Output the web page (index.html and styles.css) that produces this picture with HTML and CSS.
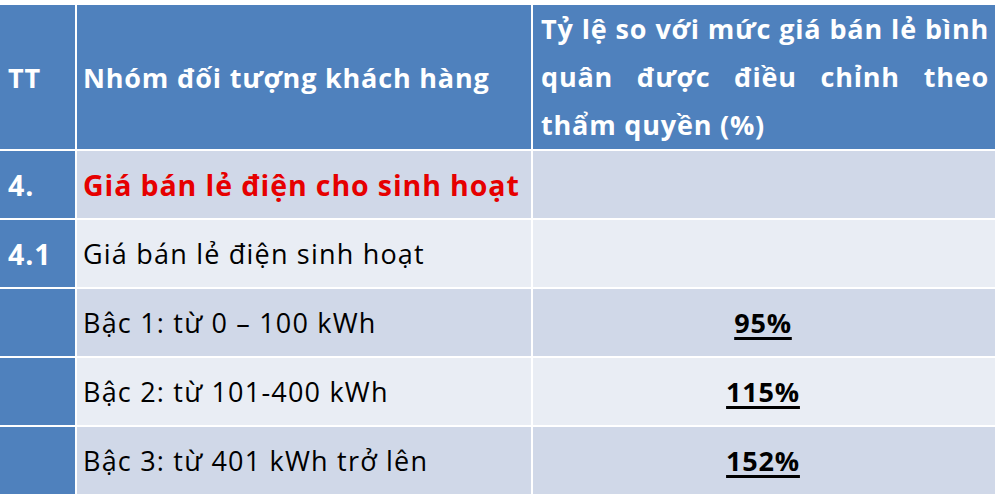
FILE: index.html
```html
<!DOCTYPE html>
<html lang="vi">
<head>
<meta charset="utf-8">
<link rel="stylesheet" href="styles.css">
</head>
<body>
<table class="tariff">
  <colgroup>
    <col class="c-no">
    <col class="c-group">
    <col class="c-ratio">
  </colgroup>
  <thead>
    <tr class="head">
      <th class="no">TT</th>
      <th class="group">Nhóm đối tượng khách hàng</th>
      <th class="ratio">Tỷ lệ so với mức giá bán lẻ bình quân được điều chỉnh theo thẩm quyền (%)</th>
    </tr>
  </thead>
  <tbody>
    <tr class="odd">
      <td class="no">4.</td>
      <td class="title">Giá bán lẻ điện cho sinh hoạt</td>
      <td></td>
    </tr>
    <tr class="even">
      <td class="no">4.1</td>
      <td>Giá bán lẻ điện sinh hoạt</td>
      <td></td>
    </tr>
    <tr class="odd">
      <td class="no"></td>
      <td>Bậc 1: từ 0 – 100 kWh</td>
      <td class="pct"><span>95%</span></td>
    </tr>
    <tr class="even">
      <td class="no"></td>
      <td>Bậc 2: từ 101-400 kWh</td>
      <td class="pct"><span>115%</span></td>
    </tr>
    <tr class="odd">
      <td class="no"></td>
      <td>Bậc 3: từ 401 kWh trở lên</td>
      <td class="pct"><span>152%</span></td>
    </tr>
  </tbody>
</table>
</body>
</html>
```
FILE: styles.css
```css
html, body {
  margin: 0;
  padding: 0;
  background: #ffffff;
}
body {
  padding-top: 5px;
  font-family: "Open Sans", Lato, sans-serif;
}
.tariff {
  border-collapse: collapse;
  width: 996px;
  table-layout: fixed;
  font-size: 27px;
  letter-spacing: 1.2px;
  color: #000;
}
.c-no { width: 76px; }
.c-group { width: 456px; }
.c-ratio { width: 464px; }
.tariff th, .tariff td {
  border: 2px solid #ffffff;
  padding: 0 8px 0 6px;
  vertical-align: middle;
  text-align: left;
}
.tariff tr > :first-child { border-left: none; }
.tariff thead tr > * { border-top: none; }
.head th {
  background: #4f81bd;
  color: #ffffff;
  font-weight: bold;
  letter-spacing: 0.8px;
  height: 141px;
}
.head th.ratio {
  text-align: justify;
  line-height: 48px;
  padding: 0 6px 0 8px;
}
.tariff td { height: 67px; }
.odd td { background: #d0d8e8; }
.even td { background: #e9edf4; }
.tariff td.no {
  background: #4f81bd;
  color: #ffffff;
  font-weight: bold;
  font-size: 28.5px;
  letter-spacing: 0.9px;
}
.tariff th.no, .tariff td.no { padding-left: 8px; }
.title {
  color: #e60000;
  font-weight: bold;
  font-size: 28.5px;
  letter-spacing: 0.9px;
}
.pct {
  text-align: center !important;
  font-weight: bold;
  letter-spacing: 0.8px;
}
.pct span {
  text-decoration: underline;
  text-decoration-thickness: 3px;
  text-underline-offset: 4px;
}
```
